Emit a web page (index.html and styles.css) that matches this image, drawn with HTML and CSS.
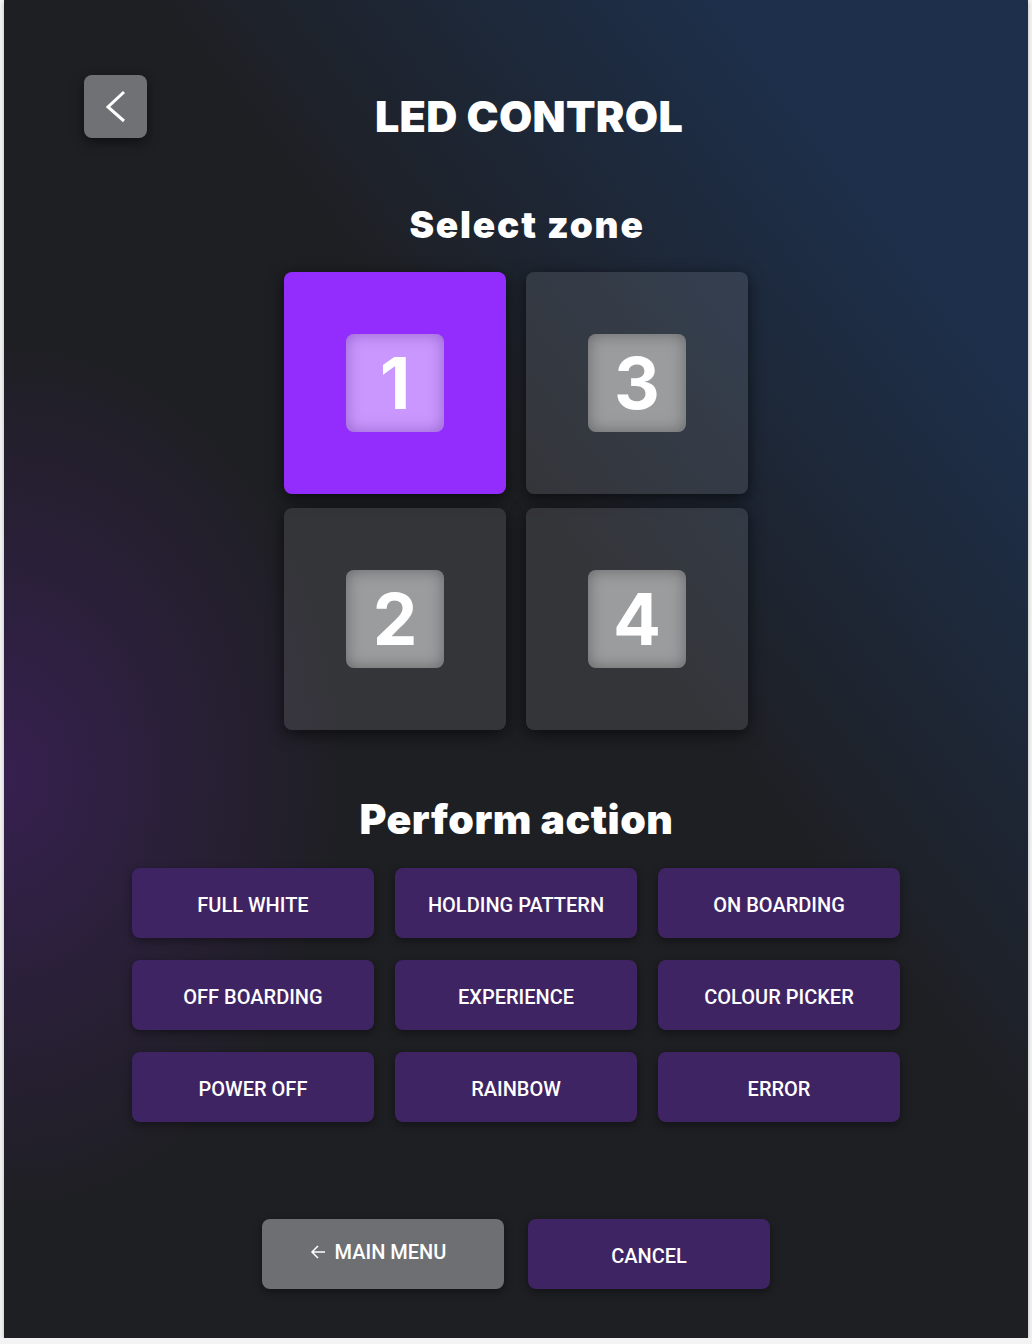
FILE: index.html
```html
<!DOCTYPE html>
<html lang="en">
<head>
  <meta charset="UTF-8" />
  <meta name="viewport" content="width=device-width, initial-scale=1.0" />
  <title>LED Control</title>
  <link rel="stylesheet" href="styles.css">
</head>
<body>
  <main class="panel">
    <header class="top">
      <button class="back-btn" aria-label="Back">
        <svg width="63" height="63" viewBox="0 0 63 63">
          <polyline points="40,17 24,32 40,46" fill="none" stroke="#fff" stroke-width="3" />
        </svg>
      </button>
      <h1>LED CONTROL</h1>
      <span></span>
    </header>

    <h2 class="zone-title">Select zone</h2>
    <div class="zones">
      <button class="zone active"><span class="zone-num">1</span></button>
      <button class="zone"><span class="zone-num">3</span></button>
      <button class="zone"><span class="zone-num">2</span></button>
      <button class="zone"><span class="zone-num">4</span></button>
    </div>

    <h2 class="action-title">Perform action</h2>
    <div class="actions">
      <button class="action">FULL WHITE</button>
      <button class="action">HOLDING PATTERN</button>
      <button class="action">ON BOARDING</button>
      <button class="action">OFF BOARDING</button>
      <button class="action">EXPERIENCE</button>
      <button class="action">COLOUR PICKER</button>
      <button class="action">POWER OFF</button>
      <button class="action">RAINBOW</button>
      <button class="action">ERROR</button>
    </div>

    <div class="bottom">
      <button class="action menu-btn">
        <svg width="16" height="16" viewBox="0 0 16 16">
          <path d="M15 8H2 M8 2L2 8l6 6" fill="none" stroke="#fff" stroke-width="1.5" />
        </svg>
        MAIN MENU
      </button>
      <button class="action cancel-btn">CANCEL</button>
    </div>
  </main>
</body>
</html>
```

FILE: styles.css
```css
body {
  margin: 0;
  background: #f3f3f3;
  font-family: Roboto, "Liberation Sans", sans-serif;
}

.panel {
  box-sizing: border-box;
  width: 1024px;
  height: 1338px;
  margin: 0 4px;
  padding-top: 75px;
  color: #fff;
  box-shadow: 0 2px 4px rgba(0,0,0,0.25);
  background:
    radial-gradient(ellipse 340px 440px at 0% 58%, rgba(56,32,82,0.95) 0%, rgba(56,32,82,0.5) 45%, rgba(56,32,82,0) 100%),
    linear-gradient(to bottom left, #1d2f4a 0%, #1d2f4a 15%, #1e1f23 43%, #1e1f23 100%);
}

button {
  border: none;
  cursor: pointer;
  font-family: inherit;
  color: #fff;
}

.top {
  display: grid;
  grid-template-columns: 63px 1fr 63px;
  padding: 0 80px;
  height: 63px;
}

.back-btn {
  width: 63px;
  height: 63px;
  padding: 0;
  background: #707175;
  border-radius: 8px;
  box-shadow: 0 4px 12px rgba(0,0,0,0.5);
}
.back-btn svg { display: block; }

h1, h2 {
  font-family: Inter, "Noto Sans", sans-serif;
  font-weight: 900;
  line-height: 1;
  text-align: center;
  margin: 0;
}

h1 {
  font-size: 43px;
  margin-top: 20px;
  padding-left: 26px;
  letter-spacing: 0.3px;
}

.zone-title {
  font-size: 37px;
  margin-top: 68px;
  padding-left: 22px;
  letter-spacing: 1.8px;
}

.zones {
  display: grid;
  grid-template-columns: 222px 222px;
  grid-auto-rows: 222px;
  column-gap: 20px;
  row-gap: 14px;
  justify-content: center;
  margin-top: 29px;
}

.zone {
  display: flex;
  align-items: center;
  justify-content: center;
  padding: 0;
  border-radius: 8px;
  background: rgba(255,255,255,0.1);
  box-shadow: 0 4px 16px rgba(0,0,0,0.6);
}
.zone.active { background: #922dfd; }

.zone-num {
  display: flex;
  align-items: center;
  justify-content: center;
  width: 98px;
  height: 98px;
  border-radius: 8px;
  background: #9b9c9e;
  box-shadow: inset 0 0 16px rgba(0,0,0,0.35);
  font-family: Inter, "Noto Sans", sans-serif;
  font-weight: 700;
  font-size: 71px;
  line-height: 1;
}
.zone.active .zone-num {
  background: #c997fd;
  box-shadow: inset 0 0 16px rgba(60,0,120,0.35);
}

.action-title {
  font-size: 41px;
  margin-top: 69px;
  padding-left: 1px;
  letter-spacing: 0.5px;
}

.actions {
  display: grid;
  grid-template-columns: repeat(3, 242px);
  grid-auto-rows: 70px;
  column-gap: 21px;
  row-gap: 22px;
  justify-content: center;
  margin-top: 28px;
}

.action {
  background: #3f2463;
  border-radius: 8px;
  box-shadow: 0 3px 8px rgba(0,0,0,0.4);
  font-size: 20px;
  font-weight: 500;
  padding: 4px 0 0;
}

.bottom {
  display: grid;
  grid-template-columns: 242px 242px;
  grid-auto-rows: 70px;
  column-gap: 24px;
  justify-content: center;
  margin-top: 97px;
}

.menu-btn {
  display: flex;
  align-items: center;
  justify-content: center;
  gap: 9px;
  background: #6e6f73;
  padding: 0 10px 4px 0;
}
.menu-btn svg { display: block; }

.cancel-btn { padding-top: 4px; }
```
